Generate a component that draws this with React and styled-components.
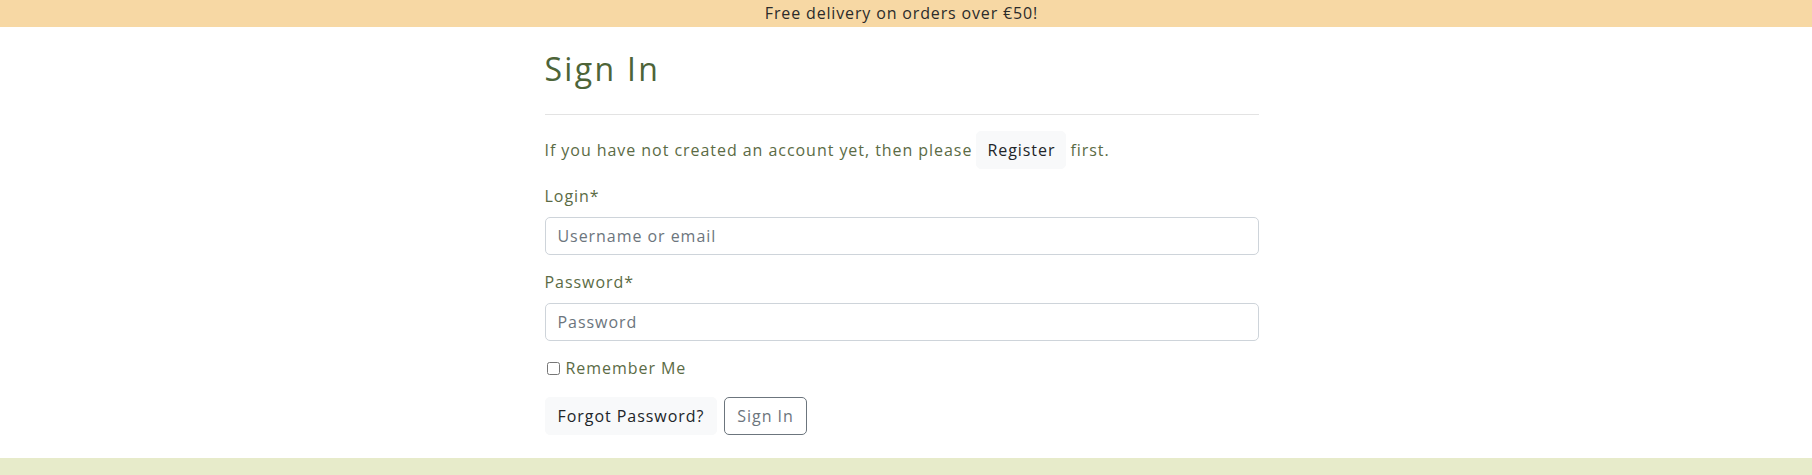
import React from "react";
import styled, { createGlobalStyle } from "styled-components";

const GlobalStyle = createGlobalStyle`
	body {
		margin: 0;
		background: #ffffff;
		font-family: "Open Sans", "Liberation Sans", sans-serif;
		font-size: 16px;
		color: #5b6b45;
	}
`;

const Banner = styled.div`
	height: 27px;
	line-height: 27px;
	padding-right: 9px;
	background: #f7d8a4;
	color: #2b2b2b;
	text-align: center;
	font-size: 16px;
	letter-spacing: 0.85px;
`;

const Main = styled.main`
	display: flex;
	justify-content: center;
	padding-right: 9px;
`;

const Content = styled.div`
	width: 714px;
`;

const Title = styled.h2`
	margin: 23px 0 0;
	font-size: 32px;
	line-height: 38px;
	font-weight: 400;
	color: #4d6438;
	letter-spacing: 2.3px;
`;

const Divider = styled.hr`
	margin: 26px 0 0;
	border: 0;
	border-top: 1px solid #e3e3e3;
`;

const Note = styled.div`
	display: flex;
	align-items: center;
	gap: 4px;
	margin-top: 16px;
	line-height: 22px;
	letter-spacing: 0.95px;
`;

const Button = styled.button`
	height: 38px;
	padding: 0 ${(p) => (p.$tight ? "10px" : "12px")};
	font-family: inherit;
	font-size: 16px;
	letter-spacing: 0.95px;
	border-radius: 5px;
	cursor: pointer;
	border: 1px solid ${(p) => (p.$outline ? "#6c757d" : "#f8f9fa")};
	background: ${(p) => (p.$outline ? "#ffffff" : "#f8f9fa")};
	color: ${(p) => (p.$outline ? "#6c757d" : "#212529")};
`;

const Label = styled.label`
	display: block;
	margin-top: 15px;
	line-height: 24px;
	letter-spacing: 0.95px;
`;

const Input = styled.input`
	display: block;
	box-sizing: border-box;
	width: 100%;
	height: 38px;
	margin-top: 9px;
	padding: 0 12px;
	font-family: inherit;
	font-size: 16px;
	letter-spacing: 0.95px;
	color: #212529;
	border: 1px solid #ced4da;
	border-radius: 5px;
	background: #fff;

	&::placeholder {
		color: #6c757d;
	}
`;

const CheckRow = styled.label`
	display: flex;
	align-items: center;
	gap: 6px;
	margin-top: 15px;
	line-height: 24px;
	letter-spacing: 0.95px;

	input {
		width: 13px;
		height: 13px;
		margin: 0 0 0 2px;
	}
`;

const Actions = styled.div`
	display: flex;
	gap: 7px;
	margin-top: 17px;
`;

const Footer = styled.footer`
	margin-top: 23px;
	height: 60px;
	background: #e7ebca;
`;

export default function App() {
	return (
		<>
			<GlobalStyle />
			<Banner>Free delivery on orders over €50!</Banner>
			<Main>
				<Content>
					<Title>Sign In</Title>
					<Divider />
					<Note>
						If you have not created an account yet, then please
						<Button type="button" $tight>Register</Button>
						first.
					</Note>
					<Label htmlFor="login">Login*</Label>
					<Input id="login" type="text" placeholder="Username or email" />
					<Label htmlFor="password">Password*</Label>
					<Input id="password" type="password" placeholder="Password" />
					<CheckRow>
						<input type="checkbox" />
						Remember Me
					</CheckRow>
					<Actions>
						<Button type="button">Forgot Password?</Button>
						<Button type="submit" $outline>Sign In</Button>
					</Actions>
				</Content>
			</Main>
			<Footer />
		</>
	);
}
